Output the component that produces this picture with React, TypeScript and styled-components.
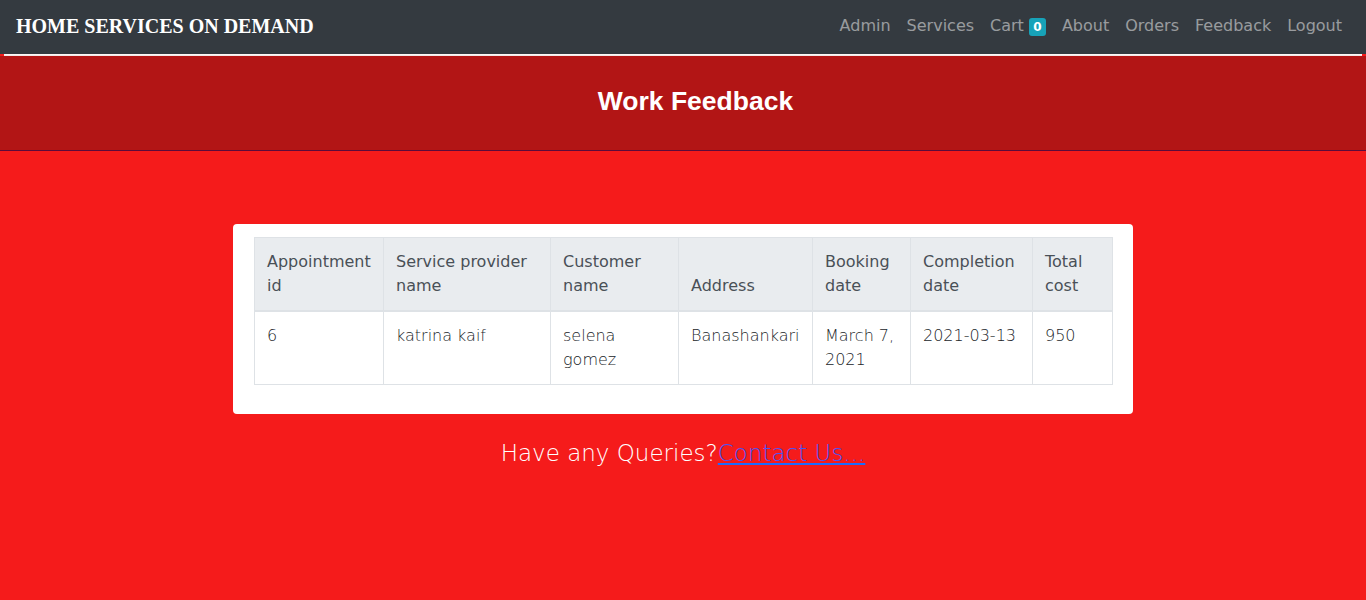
import React from "react";
import styled, { createGlobalStyle } from "styled-components";

const Global = createGlobalStyle`
  html, body { margin: 0; padding: 0; }
  body {
    background: #f51b1b;
    font-family: "DejaVu Sans", "Noto Sans", sans-serif;
    min-height: 600px;
  }
  * { box-sizing: border-box; }
`;

const Page = styled.div`
  min-height: 600px;
  background: #f51b1b;
`;

const Navbar = styled.nav`
  height: 54px;
  background: #343a40;
  display: flex;
  align-items: center;
  justify-content: space-between;
  padding: 0 16px;
`;

const Brand = styled.a`
  font-family: "Liberation Serif", "Times New Roman", serif;
  font-weight: 700;
  font-size: 20px;
  color: #ffffff;
  text-decoration: none;
  letter-spacing: 0;
  padding-bottom: 2px;
`;

const NavList = styled.ul`
  list-style: none;
  margin: 0;
  padding: 0;
  display: flex;
  align-items: center;
`;

const NavLink = styled.a`
  display: flex;
  align-items: center;
  padding: 0 8px;
  font-size: 16px;
  color: rgba(255, 255, 255, 0.5);
  text-decoration: none;
  line-height: 24px;
  padding-bottom: 2px;
`;

const Badge = styled.span`
  display: inline-flex;
  align-items: center;
  justify-content: center;
  margin-left: 5px;
  width: 17px;
  height: 18px;
  border-radius: 3px;
  background: #17a2b8;
  color: #fff;
  font-size: 12px;
  font-weight: 700;
  margin-top: 2px;
`;

const Rule = styled.div`
  height: 2px;
  margin: 0 4px;
  background: linear-gradient(#ffffff, #f0e0e0);
`;

const Banner = styled.header`
  height: 95px;
  background: #b21515;
  border-bottom: 1px solid #5c0b3c;
  display: flex;
  align-items: center;
  justify-content: center;
`;

const Title = styled.h1`
  margin: 0;
  font-family: "Liberation Sans", Arial, sans-serif;
  font-weight: 700;
  font-size: 26.5px;
  color: #fff;
  padding-bottom: 3px;
  padding-left: 25px;
`;

const Main = styled.main`
  display: flex;
  flex-direction: column;
  align-items: center;
  padding-top: 73px;
`;

const Card = styled.div`
  width: 900px;
  background: #fff;
  border-radius: 4px;
  padding: 13px 21px 13px;
`;

const Table = styled.table`
  width: 858px;
  border-collapse: collapse;
  margin-bottom: 16px;
  table-layout: fixed;
`;

const Th = styled.th`
  background: #e9ecef;
  color: #495057;
  font-weight: 400;
  font-size: 16px;
  line-height: 24px;
  text-align: left;
  vertical-align: bottom;
  padding: 12px;
  border: 1px solid #dee2e6;
  border-bottom-width: 2px;
`;

const Td = styled.td`
  color: #212529;
  font-weight: 200;
  font-size: 16px;
  line-height: 24px;
  vertical-align: top;
  padding: 12px;
  border: 1px solid #dee2e6;
`;

const Queries = styled.h4`
  margin: 25px 0 0;
  font-size: 23px;
  font-weight: 200;
  line-height: 28px;
  color: #fff;
`;

const ContactLink = styled.a`
  color: #4a55f5;
  text-decoration: underline;
  text-decoration-color: #1a6cff;
`;

const columns = [
  { label: ["Appointment", "id"], w: 129 },
  { label: ["Service provider", "name"], w: 167 },
  { label: ["Customer", "name"], w: 128 },
  { label: ["Address"], w: 134 },
  { label: ["Booking", "date"], w: 98 },
  { label: ["Completion", "date"], w: 122 },
  { label: ["Total", "cost"], w: 80 },
];

const row: React.ReactNode[] = [
  "6",
  "katrina kaif",
  <>selena<br />gomez</>,
  "Banashankari",
  <>March 7,<br />2021</>,
  "2021-03-13",
  "950",
];

export default function App() {
  return (
    <Page>
      <Global />
      <Navbar>
        <Brand href="#">HOME SERVICES ON DEMAND</Brand>
        <NavList>
          <li><NavLink href="#">Admin</NavLink></li>
          <li><NavLink href="#">Services</NavLink></li>
          <li><NavLink href="#">Cart<Badge>0</Badge></NavLink></li>
          <li><NavLink href="#">About</NavLink></li>
          <li><NavLink href="#">Orders</NavLink></li>
          <li><NavLink href="#">Feedback</NavLink></li>
          <li><NavLink href="#">Logout</NavLink></li>
        </NavList>
      </Navbar>
      <Rule />
      <Banner>
        <Title>Work Feedback</Title>
      </Banner>
      <Main>
        <Card>
          <Table>
            <colgroup>
              {columns.map((c, i) => (
                <col key={i} style={{ width: c.w }} />
              ))}
            </colgroup>
            <thead>
              <tr>
                {columns.map((c, i) => (
                  <Th key={i}>
                    {c.label.map((l, j) => (
                      <React.Fragment key={j}>
                        {j > 0 && <br />}
                        {l}
                      </React.Fragment>
                    ))}
                  </Th>
                ))}
              </tr>
            </thead>
            <tbody>
              <tr>
                {row.map((v, i) => (
                  <Td key={i}>{v}</Td>
                ))}
              </tr>
            </tbody>
          </Table>
        </Card>
        <Queries>
          Have any Queries?<ContactLink href="#">Contact Us...</ContactLink>
        </Queries>
      </Main>
    </Page>
  );
}
